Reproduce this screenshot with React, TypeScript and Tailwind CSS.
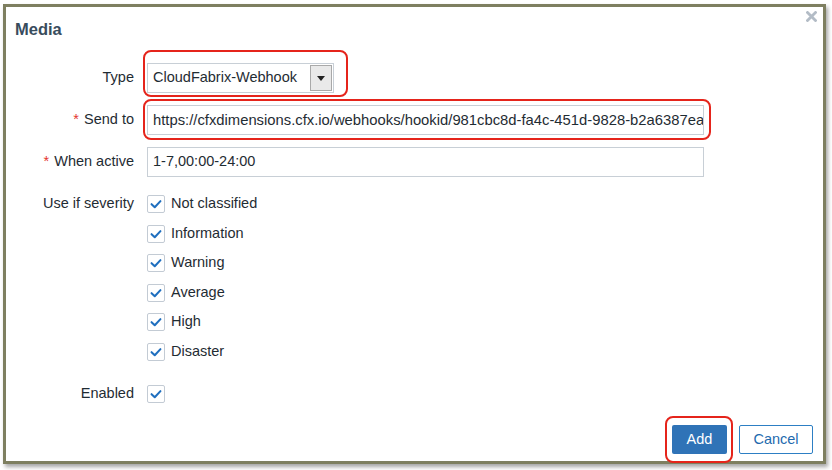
import React from 'react';

const font = { fontFamily: '"Liberation Sans", Arial, Helvetica, sans-serif' };

const CheckBox: React.FC = () => (
  <span className="flex h-[18px] w-[18px] shrink-0 items-center justify-center rounded-[2px] border border-[#c3cbd4] bg-white">
    <svg width="18" height="18" viewBox="0 0 18 18" fill="none">
      <path d="M4 9.2 L7.6 12.6 L14 5.8" stroke="#1f6fbf" strokeWidth="2.3" strokeLinecap="round" strokeLinejoin="round" />
    </svg>
  </span>
);

const Req: React.FC = () => <span className="mr-[5px] text-[#e4362f]">*</span>;

const severities = ['Not classified', 'Information', 'Warning', 'Average', 'High', 'Disaster'];

export default function App() {
  return (
    <div className="relative h-[470px] w-[832px] overflow-hidden bg-white text-[14.5px] text-[#1f2c33]" style={font}>
      <div className="ml-[3px] mt-[4px] flex h-[460px] w-[823px] flex-col border-[3px] border-[#7e7f60] bg-white shadow-[2px_3px_4px_rgba(0,0,0,0.35)]">
        {/* header */}
        <div className="relative flex h-[32px] items-end pl-[9px]">
          <h1 className="text-[16.5px] font-bold leading-[20px] text-[#384c5d]">Media</h1>
          <button className="absolute right-[5px] top-[2px] flex h-[14px] w-[14px] items-center justify-center" aria-label="Close">
            <svg width="11" height="11" viewBox="0 0 11 11">
              <path d="M1.5 1.5 L9.5 9.5 M9.5 1.5 L1.5 9.5" stroke="#b3bcc6" strokeWidth="2.8" strokeLinecap="square" />
            </svg>
          </button>
        </div>

        {/* form */}
        <div className="mt-[24px] grid grid-cols-[128px_1fr] gap-x-[13px] gap-y-[12px] pr-[119px]">
          <label className="flex h-[30px] items-center justify-end">Type</label>
          <div className="flex h-[30px] w-[187px] items-center justify-between border border-[#c8cfd6] bg-white pl-[5px] pr-[1px]">
            <span>CloudFabrix-Webhook</span>
            <span className="flex h-[26px] w-[22px] items-center justify-center border border-[#a9a9a9] bg-[#e9e9e9]">
              <svg width="8" height="5" viewBox="0 0 8 5">
                <path d="M0 0 H8 L4 5 Z" fill="#222" />
              </svg>
            </span>
          </div>

          <label className="flex h-[30px] items-center justify-end">
            <Req />
            Send to
          </label>
          <div className="flex h-[30px] items-center overflow-hidden whitespace-nowrap border border-[#c8cfd6] bg-white pl-[5px] text-[14.8px]">
            https://cfxdimensions.cfx.io/webhooks/hookid/981cbc8d-fa4c-451d-9828-b2a6387ea
          </div>

          <label className="flex h-[30px] items-center justify-end">
            <Req />
            When active
          </label>
          <div className="flex h-[30px] items-center border border-[#c8cfd6] bg-white pl-[5px]">1-7,00:00-24:00</div>

          <label className="mt-[6px] flex h-[18px] items-center justify-end">Use if severity</label>
          <div className="mt-[6px] flex flex-col gap-[11.5px]">
            {severities.map((s) => (
              <div key={s} className="flex h-[18px] items-center gap-[6px]">
                <CheckBox />
                <span>{s}</span>
              </div>
            ))}
          </div>

          <label className="mt-[12px] flex h-[18px] items-center justify-end">Enabled</label>
          <div className="mt-[12px] flex h-[18px] items-center">
            <CheckBox />
          </div>
        </div>

        {/* footer */}
        <div className="mt-auto flex justify-end gap-[12px] pb-[7px] pr-[10px]">
          <button className="h-[29px] w-[55px] rounded-[2px] bg-[#2f73b7] text-white">Add</button>
          <button className="h-[29px] w-[74px] rounded-[2px] border border-[#2d7fc4] bg-white text-[#1e6aae]">Cancel</button>
        </div>
      </div>

      {/* red annotation outlines */}
      <div className="pointer-events-none absolute left-[143px] top-[50px] h-[47px] w-[205px] rounded-[8px] border-2 border-[#e5241b]" />
      <div className="pointer-events-none absolute left-[143px] top-[99px] h-[41px] w-[568px] rounded-[8px] border-2 border-[#e5241b]" />
      <div className="pointer-events-none absolute left-[665px] top-[416px] h-[47px] w-[68px] rounded-[8px] border-2 border-[#e5241b]" />
    </div>
  );
}
